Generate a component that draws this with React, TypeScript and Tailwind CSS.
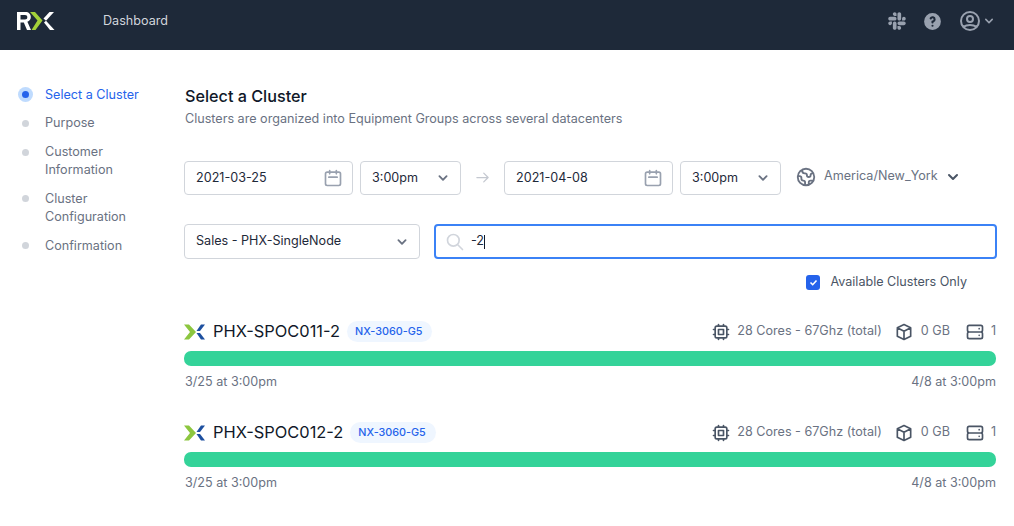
import React from 'react'
import {
  HiChevronDown,
  HiQuestionMarkCircle,
  HiOutlineArrowRight,
  HiOutlineCalendar,
  HiOutlineChip,
  HiOutlineCube,
  HiOutlineGlobe,
  HiOutlineSearch,
  HiOutlineServer,
  HiOutlineUserCircle,
} from 'react-icons/hi'
import { FaSlack } from 'react-icons/fa'

const steps = [
  { label: 'Select a Cluster', active: true },
  { label: 'Purpose' },
  { label: 'Customer Information' },
  { label: 'Cluster Configuration' },
  { label: 'Confirmation' },
]

const clusters = [
  { name: 'PHX-SPOC011-2', model: 'NX-3060-G5' },
  { name: 'PHX-SPOC012-2', model: 'NX-3060-G5' },
]

const RxLogo = () => (
  <svg width="40" height="22" viewBox="0 0 40 22" fill="none">
    <path
      d="M1 2h8.500c3.300 0 5.300 2.100 5.300 5 0 2.400-1.300 4.100-3.400 4.800L15 20h-4l-3.200-7.600H4.500V20H1V2zm3.500 3v4.500h4.500c1.500 0 2.300-.9 2.300-2.250S10.500 5 9 5H4.500z"
      fill="#fff"
    />
    <path d="M14 2h5l7.500 8.500L19.500 20h-4l6-9.500z" fill="#a3d039" />
    <path d="M27.500 8.500 33.500 2H38l-8 8.800z" fill="#fff" />
    <path d="M28 12.500 30 10.800 38.500 20H34z" fill="#fff" />
  </svg>
)

const NutanixIcon = () => (
  <svg width="21" height="16" viewBox="0 0 21 16" className="mt-[2px] shrink-0">
    <path d="M0 .5h5L12 8l-7 7.500H0L6 8z" fill="#8cc63f" />
    <path d="M12.500 7 17 .5h4L16 7z" fill="#1d4f9f" />
    <path d="M12.500 9H16l5 6.500h-4z" fill="#1d4f9f" />
  </svg>
)

const DateInput = ({ value }: { value: string }) => (
  <div className="flex h-[34px] w-[169px] items-center justify-between rounded border border-[#d1d5db] pl-[11px] pr-[9px] text-[12.6px] text-gray-800">
    <span>{value}</span>
    <HiOutlineCalendar className="h-[20px] w-[20px] text-gray-400" />
  </div>
)

const TimeSelect = () => (
  <div className="flex h-[34px] w-[101px] items-center justify-between rounded border border-[#d1d5db] pl-[11px] pr-[8px] text-[12.6px] text-gray-800">
    <span>3:00pm</span>
    <HiChevronDown className="h-[18px] w-[18px] text-gray-500" />
  </div>
)

const ClusterRow = ({ name, model }: { name: string; model: string }) => (
  <div className="flex flex-col">
    <div className="flex h-[22px] items-center justify-between">
      <div className="flex items-center">
        <NutanixIcon />
        <span className="ml-[8px] text-[16.4px] text-gray-900">{name}</span>
        <span className="ml-[7px] rounded-full bg-[#eff6ff] pl-[8px] pr-[10px] py-[3px] text-[10.8px] leading-[15px] font-medium text-[#2563eb]">
          {model}
        </span>
      </div>
      <div className="mt-px flex items-center text-[12.6px] text-gray-500">
        <HiOutlineChip className="h-[20px] w-[20px] text-gray-600" />
        <span className="ml-[6px]">28 Cores - 67Ghz (total)</span>
        <HiOutlineCube className="ml-[12px] h-[20px] w-[20px] text-gray-600" />
        <span className="ml-[7px]">0 GB</span>
        <HiOutlineServer className="ml-[15px] h-[20px] w-[20px] text-gray-600" />
        <span className="ml-[6px]">1</span>
      </div>
    </div>
    <div className="mt-[9px] h-[15px] rounded-[7px] bg-[#34d399]" />
    <div className="mt-[8px] flex justify-between pl-px text-[12.6px] leading-[16px] text-gray-500">
      <span>3/25 at 3:00pm</span>
      <span>4/8 at 3:00pm</span>
    </div>
  </div>
)

export default function App() {
  return (
    <div className="h-[526px] w-[1014px] overflow-hidden bg-white font-['Inter',sans-serif]">
      <header className="flex h-[50px] items-center justify-between bg-gray-800 pb-[8px] pl-[16px] pr-[17px]">
        <div className="flex items-center">
          <RxLogo />
          <span className="ml-[47px] text-[12.6px] text-gray-300">Dashboard</span>
        </div>
        <div className="flex items-center text-gray-400">
          <FaSlack className="h-[20px] w-[20px]" />
          <HiQuestionMarkCircle className="ml-[15px] h-[21px] w-[21px]" />
          <HiOutlineUserCircle className="ml-[15px] h-[24px] w-[24px]" />
          <HiChevronDown className="-ml-[1px] h-[16px] w-[16px]" />
        </div>
      </header>

      <div className="flex pl-[18px] pr-[17px]">
        <nav className="mt-[35.6px] flex w-[166px] shrink-0 flex-col gap-[10.8px]">
          {steps.map((step) => (
            <div key={step.label} className="flex items-start">
              <div className="flex h-[18px] w-[15px] shrink-0 items-center justify-center">
                {step.active ? (
                  <span className="flex h-[15px] w-[15px] items-center justify-center rounded-full bg-[#bfdbfe]">
                    <span className="h-[7px] w-[7px] rounded-full bg-[#2563eb]" />
                  </span>
                ) : (
                  <span className="h-[7px] w-[7px] rounded-full bg-[#d1d5db]" />
                )}
              </div>
              <span
                className={`ml-[12px] w-[100px] text-[12.6px] leading-[18px] ${
                  step.active ? 'text-[#2563eb]' : 'text-gray-500'
                }`}
              >
                {step.label}
              </span>
            </div>
          ))}
        </nav>

        <main className="flex-1 pt-[36px]">
          <h1 className="pl-px text-[16.2px] leading-[20px] font-medium text-gray-900">Select a Cluster</h1>
          <p className="mt-[4px] pl-px text-[12.6px] leading-[18px] text-gray-500">
            Clusters are organized into Equipment Groups across several datacenters
          </p>

          <div className="mt-[33px] flex items-center">
            <DateInput value="2021-03-25" />
            <div className="ml-[7px]">
              <TimeSelect />
            </div>
            <HiOutlineArrowRight className="mx-[14px] mb-[2px] h-[15px] w-[15px] text-[#c4c8d0]" />
            <DateInput value="2021-04-08" />
            <div className="ml-[7px]">
              <TimeSelect />
            </div>
            <div className="mb-[3px] flex items-center">
              <HiOutlineGlobe className="ml-[14px] h-[22px] w-[22px] text-gray-500" />
              <span className="ml-[7px] text-[12.6px] text-gray-500">America/New_York</span>
              <HiChevronDown className="ml-[5px] h-[20px] w-[20px] text-gray-600" />
            </div>
          </div>

          <div className="mt-[29px] flex">
            <div className="flex h-[35px] w-[236px] items-center justify-between rounded border border-[#d1d5db] pl-[11px] pr-[8px] text-[12.6px] text-gray-800">
              <span>Sales - PHX-SingleNode</span>
              <HiChevronDown className="h-[18px] w-[18px] text-gray-500" />
            </div>
            <div className="ml-[14px] flex h-[35px] flex-1 items-center rounded border-2 border-[#3b82f6] pl-[9px] text-[12.6px] text-gray-800">
              <HiOutlineSearch className="h-[20px] w-[20px] text-gray-300" />
              <span className="ml-[6px]">-2</span>
              <span className="h-[14px] w-px bg-gray-900" />
            </div>
          </div>

          <div className="mt-[15px] flex items-center justify-end pr-[30px]">
            <span className="flex h-[15px] w-[14px] items-center justify-center rounded-[3px] bg-[#2563eb]">
              <svg width="11" height="11" viewBox="0 0 11 11" fill="none">
                <path d="M2.500 5.500 4.700 7.700 8.500 3.500" stroke="#fff" strokeWidth="1.600" />
              </svg>
            </span>
            <span className="ml-[10px] text-[12.6px] leading-[16px] text-gray-600">Available Clusters Only</span>
          </div>

          <div className="mt-[30px] mr-[1px] flex flex-col gap-[31px]">
            {clusters.map((cluster) => (
              <ClusterRow key={cluster.name} name={cluster.name} model={cluster.model} />
            ))}
          </div>
        </main>
      </div>
    </div>
  )
}
